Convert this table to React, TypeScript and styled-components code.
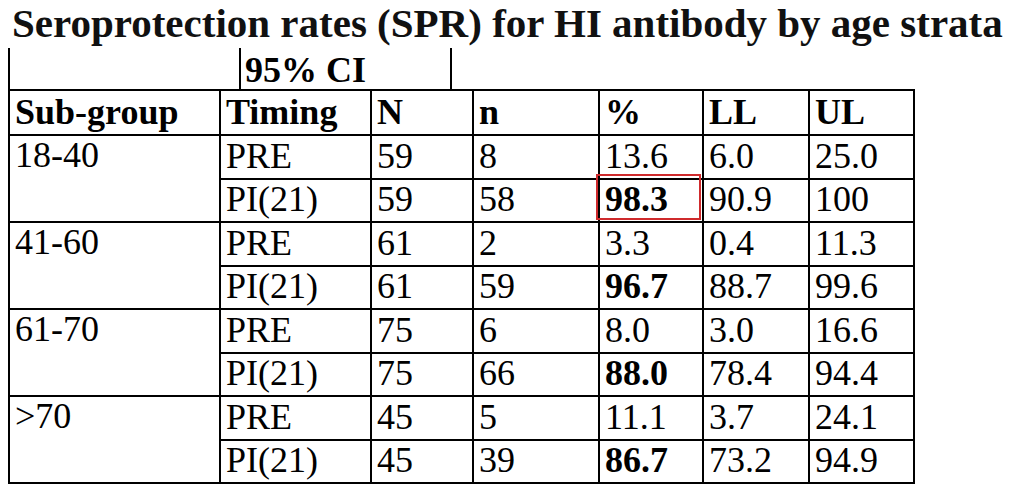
import React from 'react';
import styled, { createGlobalStyle } from 'styled-components';

type Row = {
    timing: string,
    N: number,
    n: number,
    pct: string,
    ll: string,
    ul: string,
    bold?: boolean,
    marked?: boolean
}

type Group = {
    name: string,
    rows: Row[]
}

const groups: Group[] = [
    { name: '18-40', rows: [
        { timing: 'PRE', N: 59, n: 8, pct: '13.6', ll: '6.0', ul: '25.0' },
        { timing: 'PI(21)', N: 59, n: 58, pct: '98.3', ll: '90.9', ul: '100', bold: true, marked: true },
    ]},
    { name: '41-60', rows: [
        { timing: 'PRE', N: 61, n: 2, pct: '3.3', ll: '0.4', ul: '11.3' },
        { timing: 'PI(21)', N: 61, n: 59, pct: '96.7', ll: '88.7', ul: '99.6', bold: true },
    ]},
    { name: '61-70', rows: [
        { timing: 'PRE', N: 75, n: 6, pct: '8.0', ll: '3.0', ul: '16.6' },
        { timing: 'PI(21)', N: 75, n: 66, pct: '88.0', ll: '78.4', ul: '94.4', bold: true },
    ]},
    { name: '>70', rows: [
        { timing: 'PRE', N: 45, n: 5, pct: '11.1', ll: '3.7', ul: '24.1' },
        { timing: 'PI(21)', N: 45, n: 39, pct: '86.7', ll: '73.2', ul: '94.9', bold: true },
    ]},
];

const colWidths = [211, 151, 102, 126, 104, 106, 105];

const serif = '"Liberation Serif", "Times New Roman", serif';

const GlobalStyle = createGlobalStyle`
    body {
        margin: 0;
        background: #fff;
        color: #000;
        font-family: ${serif};
    }
`;

const Page = styled.div`
    padding: 0 0 0 8px;
`;

const Title = styled.h1`
    margin: 0 0 2px 4px;
    font-family: ${serif};
    font-size: 41px;
    font-weight: bold;
    line-height: 46px;
    color: #111;
    white-space: nowrap;
`;

const CiBar = styled.div`
    display: flex;
    width: 444px;
    height: 42px;
    border-left: 2px solid #000;
    box-sizing: border-box;
`;

const CiSpacer = styled.div`
    width: 229px;
`;

const CiLabel = styled.div`
    width: 213px;
    border-left: 2px solid #000;
    border-right: 2px solid #000;
    font-family: ${serif};
    font-size: 36px;
    font-weight: bold;
    line-height: 36px;
    padding: 4px 0 0 4px;
    box-sizing: border-box;
    white-space: nowrap;
`;

const Table = styled.table`
    border-collapse: collapse;
    table-layout: fixed;
    width: 905px;
    margin-top: -1px;
`;

const Cell = styled.td<{ $bold?: boolean, $head?: boolean, $marked?: boolean }>`
    position: relative;
    border: 2px solid #000;
    height: ${p => p.$head ? '39px' : '37.5px'};
    padding: 0 4px 4px 5px;
    font-family: ${serif};
    font-size: 36px;
    line-height: 36px;
    vertical-align: bottom;
    text-align: left;
    font-weight: ${p => (p.$bold || p.$head) ? 'bold' : 'normal'};
    white-space: nowrap;
    overflow: visible;

    ${p => p.$marked && `
        &::after {
            content: '';
            position: absolute;
            left: -4px;
            top: -6px;
            right: 1px;
            bottom: 1px;
            border: 2px solid #cf2a2c;
        }
    `}
`;

const GroupCell = styled(Cell)`
    vertical-align: top;
    padding-top: 1px;
`;

export default function App() {
    return <>
        <GlobalStyle />
        <Page>
            <Title>Seroprotection rates (SPR) for HI antibody by age strata</Title>
            <CiBar>
                <CiSpacer />
                <CiLabel>95% CI</CiLabel>
            </CiBar>
            <Table>
                <colgroup>
                    {colWidths.map((w, i) => <col key={i} style={{ width: w }} />)}
                </colgroup>
                <thead>
                    <tr>
                        {['Sub-group', 'Timing', 'N', 'n', '%', 'LL', 'UL'].map(h =>
                            <Cell as="th" key={h} $head>{h}</Cell>)}
                    </tr>
                </thead>
                <tbody>
                    {groups.map(g => g.rows.map((r, i) =>
                        <tr key={g.name + r.timing}>
                            {i === 0 && <GroupCell rowSpan={g.rows.length}>{g.name}</GroupCell>}
                            <Cell>{r.timing}</Cell>
                            <Cell>{r.N}</Cell>
                            <Cell>{r.n}</Cell>
                            <Cell $bold={r.bold} $marked={r.marked}>{r.pct}</Cell>
                            <Cell>{r.ll}</Cell>
                            <Cell>{r.ul}</Cell>
                        </tr>
                    ))}
                </tbody>
            </Table>
        </Page>
    </>;
}
